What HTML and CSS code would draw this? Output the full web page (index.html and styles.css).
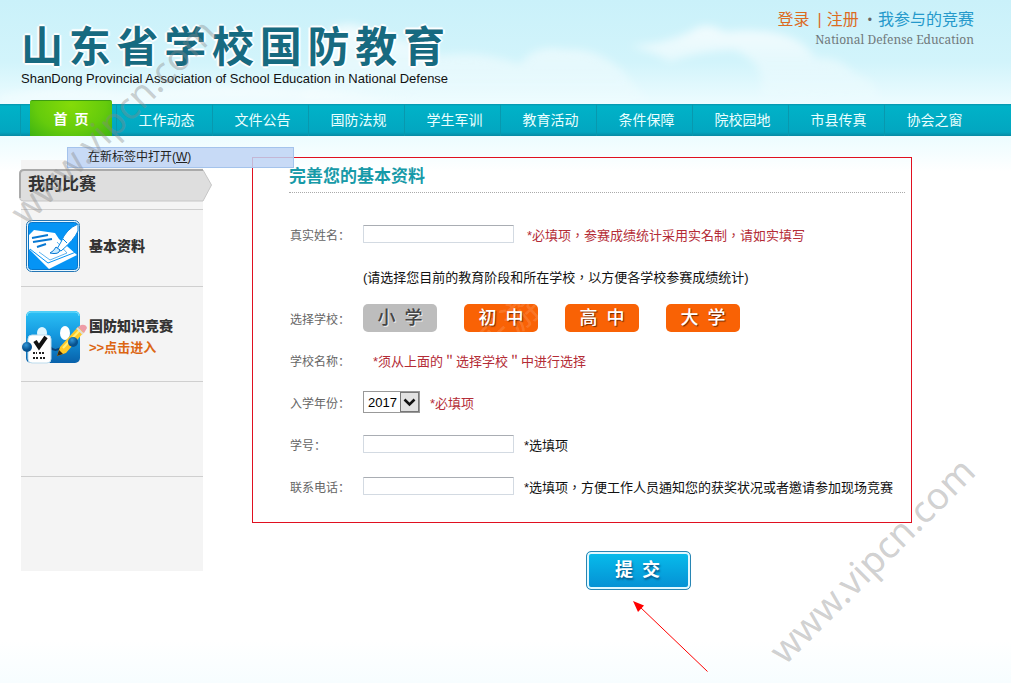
FILE: index.html
```html
<!DOCTYPE html>
<html lang="zh-CN">
<head>
<meta charset="utf-8">
<title>山东省学校国防教育</title>
<link rel="stylesheet" href="styles.css">
</head>
<body>
<header class="header">
  <svg class="clouds" viewBox="0 0 1011 104" preserveAspectRatio="xMidYMax slice" aria-hidden="true">
    <defs>
      <filter id="soft" x="-10%" y="-20%" width="120%" height="140%"><feGaussianBlur stdDeviation="4"/></filter>
      <linearGradient id="puff" x1="0" y1="0" x2="0" y2="1"><stop offset="0" stop-color="#fff" stop-opacity=".75"/><stop offset="1" stop-color="#fff" stop-opacity=".1"/></linearGradient>
    </defs>
    <g filter="url(#soft)" fill="url(#puff)">
      <path d="M330 30Q350 18 375 34Q410 40 440 56Q480 50 520 64Q535 44 565 50Q595 48 620 68L650 104H300Z"/>
      <path d="M630 46Q665 44 690 32Q705 20 725 32Q755 28 780 34Q805 40 815 58Q840 56 855 74Q875 78 880 100L760 96Q770 66 735 50Q700 50 670 62Q655 52 630 46Z"/>
      <path d="M0 96Q60 84 120 92Q240 80 340 92L420 104H0Z"/>
    </g>
  </svg>
  <div class="brand">
    <h1 class="brand-name">山东省学校国防教育</h1>
    <p class="brand-sub">ShanDong Provincial Association of School Education in National Defense</p>
  </div>
  <div class="account">
    <div class="account-links">
      <a class="warm" href="#">登录</a><span class="bar">|</span><a class="warm" href="#">注册</a><span class="dot">•</span><a href="#">我参与的竞赛</a>
    </div>
    <p class="account-sub">National Defense Education</p>
  </div>
</header>

<nav class="nav">
  <a class="tab current" href="#"><span>首&ensp;页</span></a>
  <a class="tab" href="#">工作动态</a>
  <a class="tab" href="#">文件公告</a>
  <a class="tab" href="#">国防法规</a>
  <a class="tab" href="#">学生军训</a>
  <a class="tab" href="#">教育活动</a>
  <a class="tab" href="#">条件保障</a>
  <a class="tab" href="#">院校园地</a>
  <a class="tab" href="#">市县传真</a>
  <a class="tab" href="#">协会之窗</a>
</nav>

<main class="content">
  <aside class="sidebar">
    <h2 class="side-title">
      <svg class="side-shape" viewBox="0 0 193 33" aria-hidden="true"><path d="M4.500 1H184L192.500 16L184 32H4.500Q.500 32 .500 28V5Q.500 1 4.500 1Z" fill="#dedede" stroke="#c6c6c6"/><path d="M1 29V5Q1 1 5 1H184" fill="none" stroke="#aaa" stroke-width="2"/></svg>
      <span>我的比赛</span>
    </h2>
    <a class="side-item first" href="#">
      <svg class="side-icon" width="62" height="54" viewBox="0 0 62 54" aria-hidden="true">
        <rect x=".5" y="1.500" width="53" height="51" rx="5" fill="#e8f7ff" stroke="#2476b5"/>
        <rect x="2.500" y="3.500" width="49" height="47" rx="3" fill="#0594f5" stroke="#0875c9"/>
        <path d="M3 16L8 11L29 14L33 20L51 36L23 50L3 30Z" fill="#fff"/>
        <path d="M4 30L22 44L50 33" fill="none" stroke="#0594f5"/>
        <path d="M6 19L22 16M7 23L26 20M11 28L20 25" stroke="#0878d2" stroke-width="2"/>
        <path d="M13 33L24 41L41 34L31 23" fill="none" stroke="#5fb3ee"/>
        <path d="M52 5Q40 10 35 23L31 30L35 32Q48 21 52 12Z" fill="#fff" stroke="#0788e5"/>
        <path d="M37 20L41 24" stroke="#0788e5"/>
        <path d="M30 28L34 31Q33 36 24 34Q28 32 30 28Z" fill="#c9ebff" stroke="#0878d2"/>
      </svg>
      <span class="side-text"><strong>基本资料</strong></span>
    </a>
    <a class="side-item" href="#">
      <svg class="side-icon" width="62" height="54" viewBox="0 0 62 54" aria-hidden="true">
        <defs><linearGradient id="face" x1="0" y1="0" x2="0" y2="1"><stop offset="0" stop-color="#2cc1f6"/><stop offset=".45" stop-color="#159ae0"/><stop offset="1" stop-color="#0861aa"/></linearGradient>
        <radialGradient id="hand" cx=".4" cy=".3"><stop offset="0" stop-color="#3397d8"/><stop offset="1" stop-color="#07528f"/></radialGradient></defs>
        <rect x="0" y="1" width="54" height="52" rx="5" fill="url(#face)"/>
        <path d="M1 6Q1 2 5 2H49Q53 2 53 6" fill="none" stroke="#75def9"/>
        <ellipse cx="16" cy="23" rx="5" ry="6" fill="#dff6ff"/><ellipse cx="39" cy="23" rx="5" ry="7" fill="#fff"/>
        <path d="M24 37Q29 43 36 37" fill="none" stroke="#073f76" stroke-width="2"/>
        <path d="M31 46L34 37L52 17L58 22L40 43Z" fill="#ffc928"/>
        <path d="M37 38L54 20" stroke="#fff078" stroke-width="2"/>
        <path d="M31 46L33 40L37 44Z" fill="#3a2b13"/>
        <path d="M52 17L55 15Q60 14 61 18L58 23Z" fill="#ee9ca7"/><path d="M51 18L57 24" stroke="#ddd" stroke-width="2"/>
        <rect x="2" y="25" width="23" height="28" rx="4" fill="#fff" stroke="#bddced"/>
        <path d="M9 31L13 37L20 27" fill="none" stroke="#111" stroke-width="4"/>
        <path d="M7 43H11M13 43H19M7 48H12M14 48H19" stroke="#222" stroke-width="2" stroke-dasharray="2 1"/>
        <circle cx="1" cy="37" r="5" fill="url(#hand)"/><circle cx="47" cy="32" r="5" fill="url(#hand)"/>
      </svg>
      <span class="side-text"><strong>国防知识竞赛</strong><span class="enter">&gt;&gt;点击进入</span></span>
    </a>
    <div class="side-blank"></div>
  </aside>

  <form class="form">
    <section class="panel">
      <h2 class="panel-title">完善您的基本资料</h2>
      <div class="rows">
        <div class="row"><label for="name">真实姓名：</label><input class="text" id="name" type="text"><span class="note required wide">*必填项，参赛成绩统计采用实名制，请如实填写</span></div>
        <div class="row hint"><p class="note">(请选择您目前的教育阶段和所在学校，以方便各学校参赛成绩统计)</p></div>
        <div class="row"><span class="label">选择学校：</span>
          <div class="levels">
            <button class="level chosen" type="button">小&ensp;学</button>
            <button class="level" type="button">初&ensp;中</button>
            <button class="level" type="button">高&ensp;中</button>
            <button class="level" type="button">大&ensp;学</button>
          </div>
        </div>
        <div class="row"><span class="label">学校名称：</span><span class="note required">*须从上面的＂选择学校＂中进行选择</span></div>
        <div class="row"><label for="year">入学年份：</label><span class="select"><select id="year"><option>2017</option></select><svg width="19" height="20" viewBox="0 0 19 20" aria-hidden="true"><rect x=".5" y=".5" width="18" height="19" fill="#e1e1e1" stroke="#777"/><path d="M4.500 7.500L9.500 12.500L14.500 7.500" fill="none" stroke="#111" stroke-width="2.500"/></svg></span><span class="note required">*必填项</span></div>
        <div class="row"><label for="number">学号：</label><input class="text" id="number" type="text"><span class="note">*选填项</span></div>
        <div class="row"><label for="phone">联系电话：</label><input class="text" id="phone" type="text"><span class="note">*选填项，方便工作人员通知您的获奖状况或者邀请参加现场竞赛</span></div>
      </div>
    </section>
    <button class="submit" type="submit">提&ensp;交</button>
  </form>
</main>

<div class="menu" role="menu"><span role="menuitem">在新标签中打开(<u>W</u>)</span></div>

<svg class="overlay" width="1011" height="683" viewBox="0 0 1011 683" aria-hidden="true">
  <path d="M707.500 671.500L639 606" stroke="#f00" fill="none"/>
  <path d="M633 601L644 605.500L638 612Z" fill="#f00"/>
  <text class="mark" x="26" y="227" transform="rotate(-45 26 227)">www.vipcn.com</text>
  <text class="mark" x="785" y="666" transform="rotate(-45 785 666)">www.vipcn.com</text>
  <text class="mark-faint" x="490" y="360" transform="rotate(-43 490 360)">乐游</text>
</svg>
</body>
</html>
```
FILE: styles.css
```css
* { box-sizing: border-box; }
body {
  margin: 0;
  position: relative;
  min-height: 100vh;
  overflow-x: hidden;
  font-family: "Liberation Sans", "Noto Sans CJK SC", sans-serif;
  background: linear-gradient(#ecfcff 136px, #fff 172px, #fff 640px, #f7fdff 683px);
}
h1, h2, p { margin: 0; }
a { color: inherit; text-decoration: none; }
button, input, select { font-family: inherit; margin: 0; }

.header {
  position: relative;
  display: flex;
  justify-content: space-between;
  height: 104px;
  padding: 0 37px 0 21px;
  background: linear-gradient(#caf1fa, #d2f4fb 60%, #edfcff);
}
.clouds { position: absolute; inset: 0; width: 100%; height: 100%; }
.brand { position: relative; padding-top: 24px; }
.brand-name {
  width: 424px;
  font-size: 42px;
  line-height: 48px;
  font-weight: bold;
  white-space: nowrap;
  text-align: justify;
  text-align-last: justify;
  color: #176a80;
  text-shadow: 2px 0 1px #fff, -2px 0 1px #fff, 0 2px 1px #fff, 0 -2px 1px #fff;
}
.brand-sub { font-size: 13px; line-height: 14px; color: #111; white-space: nowrap; }
.account { position: relative; padding-top: 9px; text-align: right; }
.account-links { display: flex; align-items: center; font-size: 16px; line-height: 22px; color: #2599cb; }
.warm, .bar { color: #dc6b1f; }
.bar { padding: 0 5px 0 8px; }
.dot { padding: 0 6px 0 9px; font-size: 12px; color: #666; }
.account-sub { font-family: "Noto Serif", "DejaVu Serif", serif; font-size: 12px; line-height: 18px; color: #71797c; }

.nav {
  position: relative;
  display: grid;
  grid-template-columns: repeat(10, 1fr);
  grid-template-rows: 32px;
  padding: 0 31px 0 20px;
  background: linear-gradient(#0793ad, #00b2c8 2px, #02a6c0 28px, #078aa4);
}
.tab {
  display: flex;
  align-items: center;
  justify-content: center;
  padding-left: 4px;
  border-left: 1px solid #0898ae;
  font-size: 14px;
  line-height: 32px;
  white-space: nowrap;
  color: #eaffff;
}
.current { padding: 0 4px 0 9px; align-items: stretch; font-weight: bold; color: #fff; }
.current span {
  flex: 1;
  margin-top: -4px;
  line-height: 36px;
  text-align: center;
  border-top: 1px solid #3d9b11;
  border-radius: 2px 2px 0 0;
  background: radial-gradient(ellipse at 50% 10%, #84db08, #65cb0c 60%, #3eb313);
}

.content { display: flex; align-items: flex-start; gap: 49px; padding: 21px 99px 0 21px; }
.sidebar {
  flex: none;
  width: 182px;
  height: 411px;
  margin-top: 3px;
  padding-top: 9px;
  background: #f4f4f4;
}
.side-title {
  position: relative;
  width: 193px;
  height: 33px;
  margin-left: -2px;
  padding-left: 9px;
  font-size: 17px;
  line-height: 32px;
  color: #333;
}
.side-shape { position: absolute; inset: 0; }
.side-title span { position: relative; }
.side-item {
  display: flex;
  align-items: center;
  gap: 1px;
  height: 95px;
  padding: 5px 0 0 5px;
  border-bottom: 1px solid #cfcfcf;
}
.first { height: 78px; margin-top: 7px; padding: 0 0 4px 5px; border-top: 1px solid #cfcfcf; }
.side-icon { flex: none; overflow: visible; }
.side-text { display: flex; flex-direction: column; font-size: 14px; line-height: 22px; font-weight: bold; color: #333; }
.enter { font-size: 13px; color: #dc6613; }
.side-blank { height: 95px; border-bottom: 1px solid #cfcfcf; }

.form { flex: 1; display: flex; flex-direction: column; align-items: flex-start; }
.panel { width: 100%; padding: 0 6px 15px 36px; border: 1px solid #e01020; }
.panel-title {
  padding-top: 3px;
  border-bottom: 1px dotted #aaa;
  font-size: 17px;
  line-height: 31px;
  color: #179aa8;
}
.rows { padding: 20px 0 0 1px; }
.row { display: flex; align-items: center; height: 42px; }
.row label, .label { flex: none; width: 73px; font-size: 12px; color: #666; }
.hint { padding-left: 73px; }
.text {
  width: 151px;
  height: 18px;
  padding: 0 3px;
  border: 1px solid #d3dae2;
  border-top-color: #a9adb3;
  border-radius: 1px;
  background: #fff;
}
.note {
  padding-left: 10px;
  font-family: "Liberation Sans", "Noto Sans CJK TC", sans-serif;
  -webkit-locale: "zh-Hant";
  font-size: 13px;
  white-space: nowrap;
  color: #111;
}
.hint .note { padding-left: 0; }
.wide { padding-left: 13px; }
.required { color: #b42c36; }
.levels { display: flex; gap: 27px; }
.level {
  width: 74px;
  height: 28px;
  padding: 0;
  border: 0;
  border-radius: 5px;
  background: #f96205;
  font-size: 18px;
  line-height: 28px;
  font-weight: 500;
  color: #fff;
  text-shadow: 1px 1px 1px #732900;
}
.chosen { background: #bdbdbd; color: #444; text-shadow: 1px 1px 0 #eee; }
.select { display: flex; width: 57px; height: 22px; border: 1px solid #999; background: #fff; }
.select select { flex: 1; min-width: 0; padding: 0 0 0 4px; border: 0; appearance: none; background: none; font-size: 13px; color: #000; }
.select svg { flex: none; margin-left: -1px; }
.submit {
  width: 105px;
  height: 39px;
  margin: 28px 0 0 334px;
  padding: 0 2px 5px 0;
  border: 1px solid #2886b4;
  border-radius: 5px;
  box-shadow: inset 0 0 0 2px #e1f8ff;
  background: linear-gradient(#07bdec, #058fd3);
  font-size: 18px;
  font-weight: bold;
  color: #fff;
  text-shadow: 1px 2px 2px #075a8c;
}

.menu {
  position: absolute;
  left: 67px;
  top: 147px;
  width: 227px;
  height: 21px;
  padding-left: 20px;
  border: 1px solid #a4c3ec;
  background: rgba(190, 212, 245, .85);
  font-size: 12px;
  line-height: 19px;
  color: #222;
}
.overlay { position: absolute; left: 0; top: 0; pointer-events: none; }
.mark { font-family: "Noto Sans", sans-serif; font-size: 37px; fill: #888; fill-opacity: .4; }
.mark-faint { font-family: "Noto Sans CJK SC", sans-serif; font-size: 36px; fill: #fff; fill-opacity: .15; }
```
